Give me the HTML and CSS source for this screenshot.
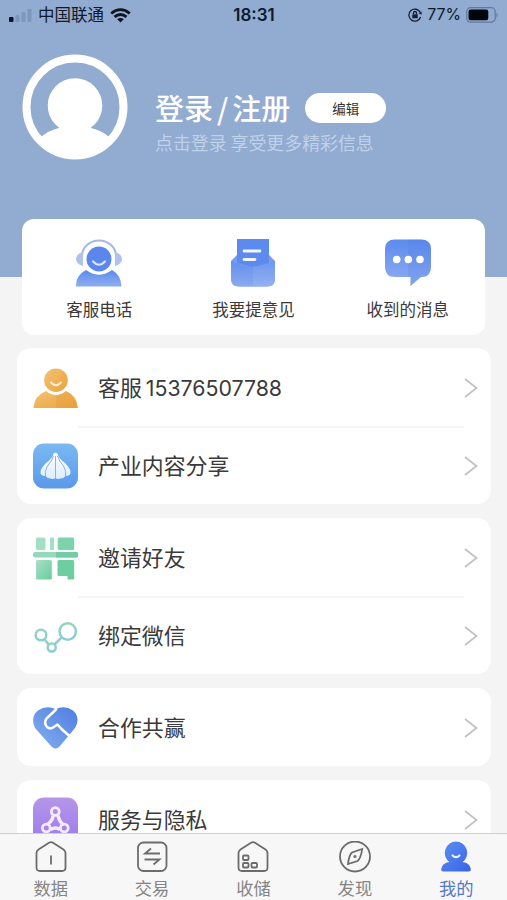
FILE: index.html
```html
<!DOCTYPE html>
<html lang="zh-CN">
<head>
<meta charset="utf-8">
<meta name="viewport" content="width=device-width, initial-scale=1">
<title>我的</title>
<link rel="stylesheet" href="styles.css">
</head>
<body>
<svg class="defs" width="0" height="0" aria-hidden="true">
  <defs>
    <linearGradient id="blue" x1="0" y1="0" x2="0" y2="1"><stop offset="0" stop-color="#5c8bee"/><stop offset="1" stop-color="#90aef0"/></linearGradient>
    <linearGradient id="blueUp" x1="0" y1="1" x2="1" y2="0"><stop offset="0" stop-color="#86b0f0"/><stop offset="1" stop-color="#4f7de2"/></linearGradient>
    <linearGradient id="orange" x1="0" y1="0" x2="1" y2="1"><stop offset="0" stop-color="#f3c273"/><stop offset="1" stop-color="#eba23e"/></linearGradient>
    <linearGradient id="sky" x1="0" y1="0" x2="0" y2="1"><stop offset="0" stop-color="#7ab9f3"/><stop offset="1" stop-color="#5b98e8"/></linearGradient>
    <linearGradient id="green" x1="0" y1="0" x2="1" y2="1"><stop offset="0" stop-color="#a9e0c8"/><stop offset="1" stop-color="#66cd9d"/></linearGradient>
    <linearGradient id="teal" x1="0" y1="0" x2="0" y2="1"><stop offset="0" stop-color="#98d3bd"/><stop offset="1" stop-color="#8accd9"/></linearGradient>
    <linearGradient id="purple" x1="0" y1="0" x2="0" y2="1"><stop offset="0" stop-color="#b596e8"/><stop offset="1" stop-color="#9b7bed"/></linearGradient>
    <linearGradient id="active" x1="0" y1="0" x2="1" y2="1"><stop offset="0" stop-color="#5c8ff0"/><stop offset="1" stop-color="#3b63e8"/></linearGradient>
    <linearGradient id="clove" x1="0" y1="0" x2="0" y2="1"><stop offset="0" stop-color="#fff"/><stop offset="1" stop-color="#dcecff"/></linearGradient>
  </defs>
</svg>
<div class="screen">
  <header class="hero">
    <div class="status">
      <div class="carrier">
        <svg width="23" height="14" viewBox="0 0 23 14"><rect x="0" y="9" width="4.500" height="5" rx="1" fill="#0c1420"/><g fill="#7d96bb"><rect x="6.500" y="7" width="4" height="7" rx="1"/><rect x="12.500" y="4" width="4" height="10" rx="1"/><rect x="18.500" y="1" width="4" height="13" rx="1"/></g></svg>
        <span class="carrier-name">中国联通</span>
        <svg width="21" height="15" viewBox="0 0 21 15" fill="none" stroke="#0c1420" stroke-width="2.800"><path d="M1.200 5.500Q10.500-2.200 19.800 5.500M4.500 8.900Q10.500 4 16.500 8.900"/><path d="M10.500 14.500L7.200 11.200Q10.500 8.700 13.800 11.200Z" fill="#0c1420" stroke="none"/></svg>
      </div>
      <time class="clock">18:31</time>
      <div class="power">
        <svg width="14" height="14" viewBox="0 0 14 14" fill="none" stroke="#142033" stroke-width="1.300"><path d="M12.300 4.500A6 6 0 1 0 12.600 9"/><path d="M10.500 5.300L13.600 6.800 13.500 3.400Z" fill="#142033" stroke="none"/><rect x="4.300" y="6.300" width="5.400" height="4" fill="#142033" stroke="none"/><path d="M5.500 6.500V5a1.500 1.500 0 0 1 3 0v1.500"/></svg>
        <span>77%</span>
        <svg width="33" height="16" viewBox="0 0 33 16"><rect x=".7" y=".7" width="28.500" height="14.500" rx="4" fill="none" stroke="#627a9f" stroke-width="1.200"/><rect x="2.500" y="2.600" width="19.800" height="10.700" rx="2.200" fill="#02060c"/><path d="M30.500 5.500Q33 8 30.500 10.500Z" fill="#627a9f"/></svg>
      </div>
    </div>
    <div class="profile">
      <svg class="avatar" width="106" height="106" viewBox="0 0 106 106"><circle cx="53" cy="53" r="48.500" fill="none" stroke="#fff" stroke-width="8"/><circle cx="53" cy="51.500" r="27.300" fill="#fff"/><path d="M17 85Q25 76.500 37 74V70H69V74Q81 76.500 89 85Q75 105 53 105T17 85Z" fill="#fff"/></svg>
      <div class="who">
        <div class="login"><h1>登录<i>/</i>注册</h1><button class="edit">编辑</button></div>
        <p>点击登录 享受更多精彩信息</p>
      </div>
    </div>
  </header>

  <main>
    <nav class="quick">
      <a class="quick-item">
        <svg width="48" height="48" viewBox="0 0 48 48"><path d="M7 17a17 15.500 0 0 1 34 0" fill="none" stroke="#a4b8e8" stroke-width="2"/><path d="M8 13v14Q1 25 1 20t7-7ZM40 13v14q7-2 7-7t-7-7Z" fill="#b0c1ee"/><path d="M.8 47.500Q1 36 11 31Q24 40 37 31Q46 36 46.500 47.500Z" fill="url(#blue)"/><circle cx="24" cy="20" r="15.500" fill="#fff"/><circle cx="24" cy="20" r="12.500" fill="#5b86eb"/><path d="M18 22.500Q24 29 30 22.500" fill="none" stroke="#dce8ff" stroke-width="2.200" stroke-linecap="round"/></svg>
        <span>客服电话</span>
      </a>
      <a class="quick-item">
        <svg width="48" height="48" viewBox="0 0 48 48"><path d="M2 22L8 16H40L46 22V40Q46 47.500 38 47.500H10Q2 47.500 2 40Z" fill="#789ced"/><path d="M8 0H40V24L24 28 8 24Z" fill="#5c8aee"/><path d="M2 22Q24 33 46 22V40Q46 47.500 38 47.500H10Q2 47.500 2 40Z" fill="url(#blue)" opacity=".8"/><path d="M24 27.500V47.500H38Q46 47.500 46 40V22Q36 27.500 24 27.500Z" fill="#fff" opacity=".08"/><path d="M15 12H31M15 20.500H26" stroke="#f0f6ff" stroke-width="2.800" stroke-linecap="round"/></svg>
        <span>我要提意见</span>
      </a>
      <a class="quick-item">
        <svg width="48" height="48" viewBox="0 0 48 48"><path d="M11 .5H37Q47 .5 47 10V28Q47 38 37 38L26.500 47V38H11Q1 38 1 28V10Q1 .5 11 .5Z" fill="url(#blue)"/><path d="M24 .5H37Q47 .5 47 10V28Q47 38 37 38L26.500 47V38H24Z" fill="#4877e5" opacity=".18"/><g fill="#fff"><circle cx="12.700" cy="20.500" r="3.800"/><circle cx="24.300" cy="20.500" r="3.800"/><circle cx="36" cy="20.500" r="3.800"/></g></svg>
        <span>收到的消息</span>
      </a>
    </nav>

    <section class="group">
      <a class="row">
        <svg class="icon" viewBox="0 0 46 46"><path d="M1.500 43Q2 31 14 26Q24 34 34 26Q45 31 45.800 43Z" fill="url(#orange)"/><circle cx="24" cy="15.500" r="14" fill="#fff"/><circle cx="24" cy="15.200" r="11.800" fill="url(#orange)"/><path d="M24 30.400V43H45.800Q45 31 34 26Q29.500 30 24 30.400Z" fill="#e99c38" opacity=".35"/><path d="M19 17.500Q24 23 29 17.500" fill="none" stroke="#fff0cc" stroke-width="2" stroke-linecap="round"/></svg>
        <span class="label">客服<b>15376507788</b></span>
        <svg class="chevron" viewBox="0 0 14 22"><path d="M1 2L12.500 11 1 20"/></svg>
      </a>
      <a class="row">
        <svg class="icon" viewBox="0 0 46 46"><rect x="1" y=".5" width="45" height="45" rx="11" fill="url(#sky)"/><path d="M21.500 10.500L23.500 9.500 25.500 10.500Q26 15 33 20Q39 26 38.500 30Q38 33 33.500 33Q31 36 28 35.500Q25 37 23.500 34.500Q22 37 19 35.500Q16 36 13.500 33Q9 33 8.500 30Q8 26 14 20Q21 15 21.500 10.500Z" fill="url(#clove)"/><path d="M21.500 13Q20 18 15.500 23Q12 29 13.500 33M25.500 13Q27 18 31.500 23Q35 29 33.500 33M23.500 13V34.500" fill="none" stroke="#86a9dc" stroke-width=".9"/></svg>
        <span class="label">产业内容分享</span>
        <svg class="chevron" viewBox="0 0 14 22"><path d="M1 2L12.500 11 1 20"/></svg>
      </a>
    </section>

    <section class="group">
      <a class="row">
        <svg class="icon" viewBox="0 0 46 46"><rect x="4" y="2.500" width="9.500" height="12.500" rx="1.500" fill="#a3dfc4"/><rect x="18" y="2.500" width="4" height="12.500" rx="1" fill="#a3dfc4"/><rect x="25.700" y="2.500" width="16.500" height="12.500" rx="1.500" fill="#7bd4ab"/><rect x="1" y="17" width="45" height="5.500" rx="2" fill="#95d9ba"/><path d="M24 17H44a2.700 2.700 0 0 1 0 5.500H24Z" fill="#71cda3"/><rect x="4" y="25" width="15.800" height="19.500" rx="1.500" fill="url(#green)"/><path d="M27 25H40.500Q42.200 25 42.200 26.500V44.500H35.500V41H27Q25.500 41 25.500 39.500V26.500Q25.500 25 27 25Z" fill="#6dcea2"/></svg>
        <span class="label">邀请好友</span>
        <svg class="chevron" viewBox="0 0 14 22"><path d="M1 2L12.500 11 1 20"/></svg>
      </a>
      <a class="row">
        <svg class="icon" viewBox="0 0 46 46"><g fill="none" stroke="url(#teal)" stroke-width="2.500"><circle cx="9" cy="22" r="5.300"/><circle cx="35.700" cy="18.500" r="8.200"/><circle cx="19.700" cy="34.500" r="4"/><path d="M12.500 26.200L16.700 31.500M29.500 24.500L22.500 31.500"/></g></svg>
        <span class="label">绑定微信</span>
        <svg class="chevron" viewBox="0 0 14 22"><path d="M1 2L12.500 11 1 20"/></svg>
      </a>
    </section>

    <section class="group">
      <a class="row">
        <svg class="icon" viewBox="0 0 46 46"><path d="M23.500 4Q14 0 6 5.500Q-2 12 3 23L19 41Q23.500 46 28 41L43 23Q49 13 41 5.500Q33 0 23.500 4Z" fill="url(#blueUp)"/><path d="M24 0V4.500L14.500 13.500Q11.500 18 15 22Q18 24.500 21 22.500L25.500 19.500L29.500 24L38 31.500" fill="none" stroke="#fff" stroke-width="2.500" stroke-linejoin="round"/></svg>
        <span class="label">合作共赢</span>
        <svg class="chevron" viewBox="0 0 14 22"><path d="M1 2L12.500 11 1 20"/></svg>
      </a>
    </section>

    <section class="group">
      <a class="row">
        <svg class="icon" viewBox="0 0 46 46"><rect x="1" y=".5" width="45" height="45" rx="11" fill="url(#purple)"/><g fill="none" stroke="#f5eaff" stroke-width="2.800"><circle cx="23.300" cy="14.500" r="3.900"/><circle cx="14.300" cy="31" r="3.900"/><circle cx="32.300" cy="31" r="3.900"/><path d="M21 18.500Q21 23 16 27M26 18.500Q27 24 30.500 27M18.500 32.500Q23.500 29.500 28 32.500" stroke-width="3.500"/></g></svg>
        <span class="label">服务与隐私</span>
        <svg class="chevron" viewBox="0 0 14 22"><path d="M1 2L12.500 11 1 20"/></svg>
      </a>
    </section>
  </main>

  <footer class="tabs">
    <a class="tab">
      <svg viewBox="0 0 32 32"><path d="M14 1.800Q16 .6 18 1.800L28.500 8.500Q30.500 10 30.500 12V26.500Q30.500 30 27 30H5Q1.500 30 1.500 26.500V12Q1.500 10 3.500 8.500ZM16 14.500V23.500"/></svg>
      <span>数据</span>
    </a>
    <a class="tab">
      <svg viewBox="0 0 32 32"><rect x="2" y="1.500" width="28.500" height="28.500" rx="5.500"/><path d="M24 12.500H9L15 7.500M8.500 18.500H23.500L17.500 23.500"/></svg>
      <span>交易</span>
    </a>
    <a class="tab">
      <svg viewBox="0 0 32 32"><path d="M14 1.800Q16 .6 18 1.800L28.500 8.500Q30.500 10 30.500 12V26.500Q30.500 30 27 30H5Q1.500 30 1.500 26.500V12Q1.500 10 3.500 8.500Z"/><rect x="6" y="14.500" width="5.500" height="4.500" rx="1"/><rect x="6" y="22" width="5.500" height="4.500" rx="1"/><rect x="14.500" y="22" width="5.500" height="4.500" rx="1"/></svg>
      <span>收储</span>
    </a>
    <a class="tab">
      <svg viewBox="0 0 32 32"><circle cx="16" cy="15.500" r="15"/><path d="M23.200 8Q22 17 18.500 20L9 23Q10 14 13 11.500Z"/><circle cx="16" cy="15.500" r=".7"/></svg>
      <span>发现</span>
    </a>
    <a class="tab current">
      <svg viewBox="0 0 32 32"><path class="solid" d="M16 .5A11.300 11.300 0 0 1 22.500 21Q30 22 30.800 28Q31 30.500 28.500 30.500H3.500Q1 30.500 1.200 28Q2 22 9.500 21A11.300 11.300 0 0 1 16 .5Z"/><path class="smile" d="M12.500 14.500Q16 18 19.500 14.500"/></svg>
      <span>我的</span>
    </a>
  </footer>
</div>
</body>
</html>
```

FILE: styles.css
```css
* { box-sizing: border-box; }
body {
  margin: 0;
  background: #f4f4f4;
  color: #3a3a3a;
  font-family: "Noto Sans CJK SC", sans-serif;
}
svg { display: block; flex: none; }
.defs { position: absolute; }
.screen {
  display: flex;
  flex-direction: column;
  height: 900px;
  overflow: hidden;
}
.hero {
  flex: none;
  height: 277px;
  background: #92abd1;
}
.status {
  display: grid;
  grid-template-columns: 1fr auto 1fr;
  align-items: center;
  height: 30px;
  padding: 0 8px 0 9px;
  color: #101a2a;
  font: 500 16px/30px Inter, "Noto Sans CJK SC", sans-serif;
}
.carrier, .power { display: flex; align-items: center; }
.carrier { gap: 6px; }
.carrier-name { font-weight: 400; font-size: 16.500px; }
.power { justify-content: flex-end; gap: 5px; }
.power span { font-weight: 400; font-size: 15.800px; }
.clock { font-weight: 600; font-size: 17px; }
.profile {
  display: flex;
  gap: 27px;
  padding: 24px 0 0 22px;
}
.who { padding-top: 31px; color: #fff; }
.login { display: flex; align-items: center; gap: 15px; }
h1 {
  margin: 0;
  font-size: 29px;
  font-weight: 500;
  line-height: 44px;
  white-space: nowrap;
}
h1 i { margin: 0 4px; font-style: normal; }
.edit {
  width: 81px;
  height: 30px;
  margin-top: 1px;
  padding: 0;
  border: 0;
  border-radius: 15px;
  background: #fff;
  color: #333;
  font: 400 13.500px/28px "Noto Sans CJK SC", sans-serif;
}
.who p {
  margin: 0;
  color: #c0d1ea;
  font-size: 17.900px;
  line-height: 27px;
  white-space: nowrap;
}
main {
  display: flex;
  flex: 1;
  flex-direction: column;
  gap: 14px;
  min-height: 0;
  margin-top: -58px;
  padding: 0 16px 0 17px;
  overflow: hidden;
}
.quick {
  display: grid;
  flex: none;
  grid-template-columns: repeat(3, 1fr);
  height: 116px;
  margin: 0 6px -1px 5px;
  padding-top: 20px;
  border-radius: 12px;
  background: #fff;
}
.quick-item {
  display: flex;
  flex-direction: column;
  align-items: center;
  gap: 9px;
  font-size: 16.500px;
  line-height: 26px;
}
.group {
  flex: none;
  border-radius: 14px;
  background: #fff;
}
.row {
  display: flex;
  align-items: center;
  height: 78px;
  padding: 1px 13px 0 15px;
}
.row + .row {
  background: linear-gradient(#f5f5f5, #f5f5f5) 61px 0 / 386px 2px no-repeat;
}
.icon { width: 46px; height: 46px; }
.label {
  flex: 1;
  padding: 0 0 1px 20px;
  font-size: 21.900px;
  line-height: 32px;
}
.label b {
  margin-left: 4px;
  font: 400 21.300px/32px Inter, sans-serif;
}
.chevron {
  width: 14px;
  height: 22px;
  fill: none;
  stroke: #c4c4c4;
  stroke-width: 2;
}
.tabs {
  display: grid;
  flex: none;
  grid-template-columns: repeat(5, 1fr);
  height: 67px;
  padding-top: 7px;
  border-top: 1px solid #cfcfcf;
  background: #f7f7f7;
}
.tab {
  display: flex;
  flex-direction: column;
  align-items: center;
  gap: 2px;
  color: #858585;
  font-size: 17.300px;
  line-height: 26px;
}
.tab svg {
  width: 32px;
  height: 32px;
  fill: none;
  stroke: #6c6c6c;
  stroke-width: 1.800;
}
.current { color: #5379cb; }
.tab .solid { fill: url(#active); stroke: none; }
.tab .smile { stroke: #eaf2ff; stroke-width: 2.200; stroke-linecap: round; }
```
